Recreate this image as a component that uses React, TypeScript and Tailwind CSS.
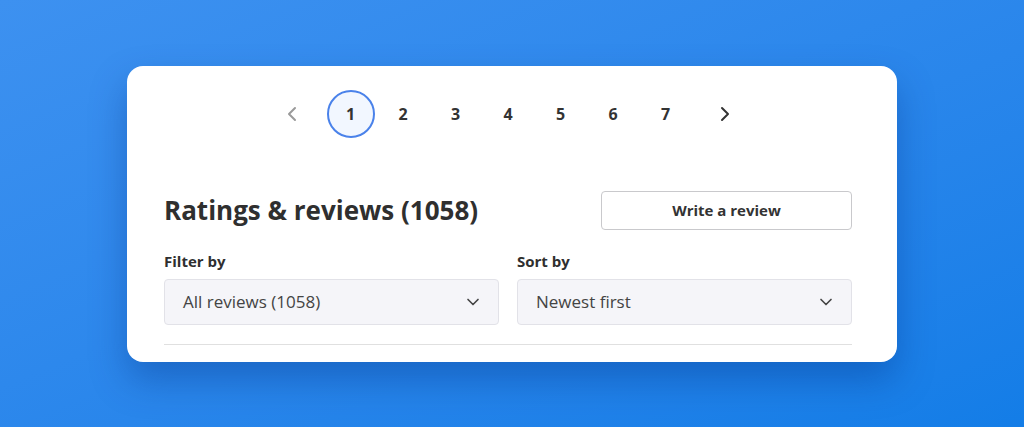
import { ChevronDown, ChevronLeft, ChevronRight } from 'lucide-react'

const pages = [1, 2, 3, 4, 5, 6, 7]

function Pagination() {
  return (
    <div className="flex items-center justify-center">
      <button type="button" className="mr-[11px] flex h-12 w-12 items-center justify-center text-[#9a9a9a]">
        <ChevronLeft className="h-6 w-6" strokeWidth={2} />
      </button>
      <div className="flex items-center gap-[4.5px]">
        {pages.map((p) => (
          <button
            key={p}
            type="button"
            className={
              p === 1
                ? 'flex h-12 w-12 items-center justify-center rounded-full border-2 border-[#4a82ea] bg-[#f2f7ff] text-[16px] font-bold text-[#333]'
                : 'flex h-12 w-12 items-center justify-center text-[16px] font-bold text-[#333]'
            }
          >
            {p}
          </button>
        ))}
      </div>
      <button type="button" className="ml-[11px] flex h-12 w-12 items-center justify-center text-[#333]">
        <ChevronRight className="h-6 w-6" strokeWidth={2} />
      </button>
    </div>
  )
}

function SelectBox({ label, value }: { label: string; value: string }) {
  return (
    <div className="flex flex-col">
      <span className="mb-[8px] text-[15px] font-bold leading-5 text-[#2f2f2f]">{label}</span>
      <div className="flex h-[46px] items-center justify-between rounded-[4px] border border-[#e2e2e8] bg-[#f5f5f9] pl-[18px] pr-[15px]">
        <span className="text-[17px] text-[#444]">{value}</span>
        <ChevronDown className="h-5 w-5 text-[#444]" strokeWidth={2} />
      </div>
    </div>
  )
}

export default function App() {
  return (
    <div
      className="flex h-[427px] w-full items-center justify-center bg-gradient-to-br from-[#3d91f0] to-[#137de7]"
      style={{ fontFamily: '"Open Sans", "Noto Sans", sans-serif' }}
    >
      <div className="w-[770px] rounded-[16px] bg-white pb-[17px] pl-[37px] pr-[45px] pt-[24px] shadow-[0_18px_36px_rgba(0,45,130,0.35)]">
        <Pagination />

        <div className="mt-[53px] flex items-center justify-between">
          <h2 className="text-[26px] font-bold leading-8 text-[#2f2f2f]">Ratings &amp; reviews (1058)</h2>
          <button
            type="button"
            className="h-[39px] w-[251px] rounded-[4px] border border-[#c9c9cc] bg-white text-[15px] font-bold text-[#333]"
          >
            Write a review
          </button>
        </div>

        <div className="mt-[21px] grid grid-cols-2 gap-[18px]">
          <SelectBox label="Filter by" value="All reviews (1058)" />
          <SelectBox label="Sort by" value="Newest first" />
        </div>

        <div className="mt-[19px] h-px bg-[#e0e0e0]" />
      </div>
    </div>
  )
}
